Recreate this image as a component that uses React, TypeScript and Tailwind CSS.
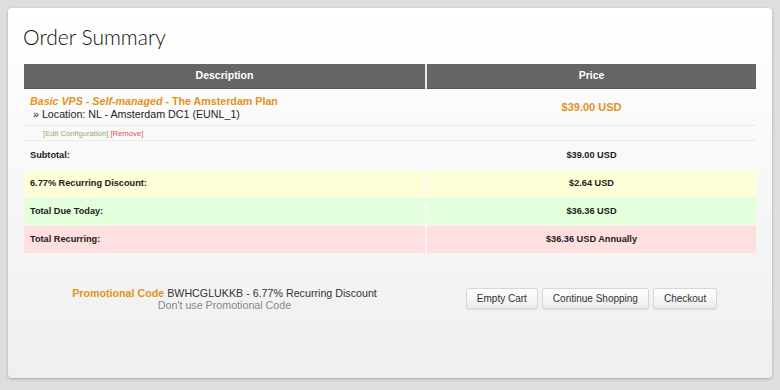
const rows = [
  { label: 'Subtotal:', value: '$39.00 USD', bg: 'bg-transparent', h: 'h-[29px]' },
  { label: '6.77% Recurring Discount:', value: '$2.64 USD', bg: 'bg-[#ffffd7]', h: 'h-[26px]' },
  { label: 'Total Due Today:', value: '$36.36 USD', bg: 'bg-[#e3ffdb]', h: 'h-[27px]' },
  { label: 'Total Recurring:', value: '$36.36 USD Annually', bg: 'bg-[#ffdfdf]', h: 'h-[27px]' },
];

function Button({ children }: { children: React.ReactNode }) {
  return (
    <button
      type="button"
      className="h-[21px] rounded-[3px] border border-[#d6d6d6] bg-gradient-to-b from-white to-[#ececec] px-[10px] text-[10px] leading-none text-[#333] shadow-[0_1px_1px_rgba(0,0,0,0.08)]"
    >
      {children}
    </button>
  );
}

export default function App() {
  return (
    <div className="h-[390px] w-[780px] bg-[#dedede] p-2 font-['Liberation_Sans',Arial,sans-serif]">
      <div className="flex h-[370px] flex-col rounded-[4px] bg-gradient-to-b from-white to-[#efefef] px-4 pt-[14px] shadow-[0_1px_3px_rgba(0,0,0,0.25)]">
        <h1 className="-ml-px font-['Lato',sans-serif] text-[21px] font-light leading-[30px] text-[#111]">Order Summary</h1>

        <div className="mt-[12px] flex flex-col text-[#222]">
          {/* header */}
          <div className="grid h-[25px] grid-cols-[401px_1fr] gap-[2px] bg-[#e8e8e8]">
            <div className="flex items-center justify-center border-b border-[#555] bg-[#666] text-[10.5px] font-bold text-white">Description</div>
            <div className="flex items-center justify-center border-b border-[#555] bg-[#666] text-[10.5px] font-bold text-white">Price</div>
          </div>

          {/* item */}
          <div className="grid h-[37px] grid-cols-[401px_1fr] gap-[2px] border-b border-[#ebebeb]">
            <div className="flex flex-col justify-center pl-[6px] pt-[2px]">
              <div className="text-[10.7px] font-bold leading-[13px] text-[#e2931d]">
                <i>Basic VPS - Self-managed</i> - The Amsterdam Plan
              </div>
              <div className="pl-[3px] text-[10.7px] leading-[13px] text-[#222]">» Location: NL - Amsterdam DC1 (EUNL_1)</div>
            </div>
            <div className="flex items-center justify-center text-[11px] font-bold text-[#e2931d]">$39.00 USD</div>
          </div>
          <div className="grid h-[15px] grid-cols-[401px_1fr] gap-[2px] border-b border-[#ebebeb]">
            <div className="flex items-center pl-[19px] pt-[2px] text-[7.7px]">
              <span className="text-[#93ad6a]">[Edit Configuration]</span>
              <span className="ml-[2px] text-[#d9555a]">[Remove]</span>
            </div>
            <div />
          </div>

          <div className="flex flex-col gap-px">
            {rows.map((r) => (
              <div key={r.label} className={`grid grid-cols-[401px_1fr] gap-[2px] ${r.h}`}>
                <div className={`flex items-center pl-[6px] text-[9.2px] font-bold ${r.bg}`}>{r.label}</div>
                <div className={`flex items-center justify-center text-[9.2px] font-bold ${r.bg}`}>{r.value}</div>
              </div>
            ))}
          </div>
        </div>

        <div className="mt-[34px] grid grid-cols-[401px_1fr] gap-[2px]">
          <div className="flex flex-col items-center text-[10.7px] leading-[12px]">
            <div className="text-[#333]">
              <span className="font-bold text-[#e2931d]">Promotional Code</span> BWHCGLUKKB - 6.77% Recurring Discount
            </div>
            <div className="text-[#888]">Don't use Promotional Code</div>
          </div>
          <div className="flex items-start justify-center gap-1 pt-px">
            <Button>Empty Cart</Button>
            <Button>Continue Shopping</Button>
            <Button>Checkout</Button>
          </div>
        </div>
      </div>
    </div>
  );
}
